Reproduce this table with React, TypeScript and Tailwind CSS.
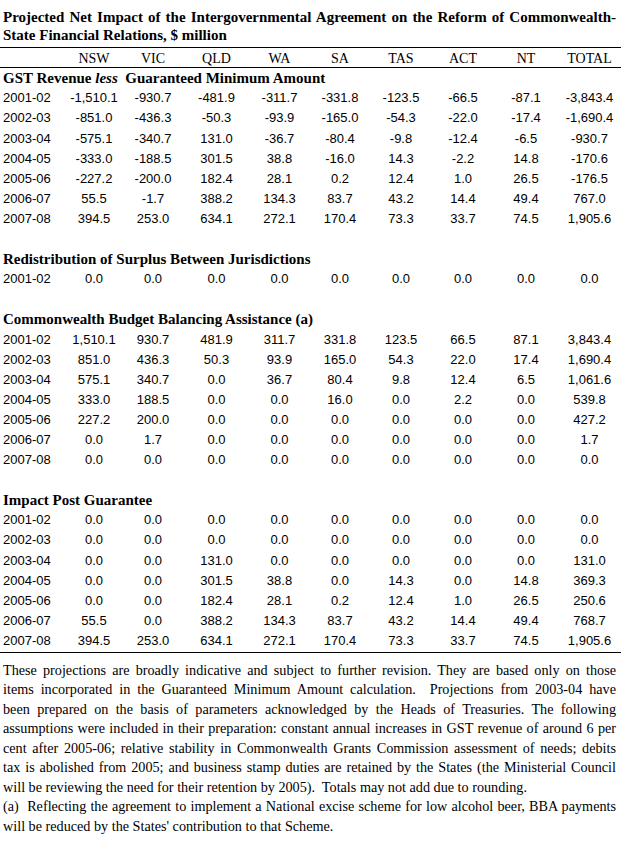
const cols = "grid grid-cols-[66px_56px_62px_65px_61px_60px_62px_62px_64px_63px]"

const heads = ["NSW", "VIC", "QLD", "WA", "SA", "TAS", "ACT", "NT", "TOTAL"]

type Row = [string, ...string[]]

const zeros = (y: string): Row => [y, "0.0", "0.0", "0.0", "0.0", "0.0", "0.0", "0.0", "0.0", "0.0"]

const gst: Row[] = [
  ["2001-02", "-1,510.1", "-930.7", "-481.9", "-311.7", "-331.8", "-123.5", "-66.5", "-87.1", "-3,843.4"],
  ["2002-03", "-851.0", "-436.3", "-50.3", "-93.9", "-165.0", "-54.3", "-22.0", "-17.4", "-1,690.4"],
  ["2003-04", "-575.1", "-340.7", "131.0", "-36.7", "-80.4", "-9.8", "-12.4", "-6.5", "-930.7"],
  ["2004-05", "-333.0", "-188.5", "301.5", "38.8", "-16.0", "14.3", "-2.2", "14.8", "-170.6"],
  ["2005-06", "-227.2", "-200.0", "182.4", "28.1", "0.2", "12.4", "1.0", "26.5", "-176.5"],
  ["2006-07", "55.5", "-1.7", "388.2", "134.3", "83.7", "43.2", "14.4", "49.4", "767.0"],
  ["2007-08", "394.5", "253.0", "634.1", "272.1", "170.4", "73.3", "33.7", "74.5", "1,905.6"],
]

const bba: Row[] = [
  ["2001-02", "1,510.1", "930.7", "481.9", "311.7", "331.8", "123.5", "66.5", "87.1", "3,843.4"],
  ["2002-03", "851.0", "436.3", "50.3", "93.9", "165.0", "54.3", "22.0", "17.4", "1,690.4"],
  ["2003-04", "575.1", "340.7", "0.0", "36.7", "80.4", "9.8", "12.4", "6.5", "1,061.6"],
  ["2004-05", "333.0", "188.5", "0.0", "0.0", "16.0", "0.0", "2.2", "0.0", "539.8"],
  ["2005-06", "227.2", "200.0", "0.0", "0.0", "0.0", "0.0", "0.0", "0.0", "427.2"],
  ["2006-07", "0.0", "1.7", "0.0", "0.0", "0.0", "0.0", "0.0", "0.0", "1.7"],
  zeros("2007-08"),
]

const post: Row[] = [
  zeros("2001-02"),
  zeros("2002-03"),
  ["2003-04", "0.0", "0.0", "131.0", "0.0", "0.0", "0.0", "0.0", "0.0", "131.0"],
  ["2004-05", "0.0", "0.0", "301.5", "38.8", "0.0", "14.3", "0.0", "14.8", "369.3"],
  ["2005-06", "0.0", "0.0", "182.4", "28.1", "0.2", "12.4", "1.0", "26.5", "250.6"],
  ["2006-07", "55.5", "0.0", "388.2", "134.3", "83.7", "43.2", "14.4", "49.4", "768.7"],
  ["2007-08", "394.5", "253.0", "634.1", "272.1", "170.4", "73.3", "33.7", "74.5", "1,905.6"],
]

const serif = "font-['Liberation_Serif','Times_New_Roman',serif]"
const sans = "font-['Liberation_Sans',Arial,sans-serif]"

function DataRow({ row }: { row: Row }) {
  return (
    <div className={`${cols} h-[20.1px] items-center text-[13px] ${sans}`}>
      <div className="pl-[3px]">{row[0]}</div>
      {row.slice(1).map((v, i) => (
        <div key={i} className="text-center">{v}</div>
      ))}
    </div>
  )
}

function Heading({ children }: { children: React.ReactNode }) {
  return (
    <div className={`h-[20.1px] leading-[20.1px] pl-[3px] text-[15px] font-bold ${serif} whitespace-pre`}>
      <span>{children}</span>
    </div>
  )
}

const Blank = () => <div className="h-[20.1px]" />

// one printed line; justified unless it closes a paragraph
function JLine({ children, last }: { children: React.ReactNode; last?: boolean }) {
  return (
    <div className={last ? "text-left" : "text-justify [text-align-last:justify]"}>{children}</div>
  )
}

export default function App() {
  return (
    <div className="w-[621px] bg-white text-black">
      <div className={`pt-[8px] pl-[3px] pr-[5px] text-[15px] leading-[18px] font-bold ${serif}`}>
        <JLine>Projected Net Impact of the Intergovernmental Agreement on the Reform of Commonwealth-</JLine>
        <JLine last>State Financial Relations, $ million</JLine>
      </div>

      <div className="mt-[3px] border-t border-black" />
      <div className={`${cols} h-[19px] items-center text-[14px] ${serif}`}>
        <div />
        {heads.map((h) => (
          <div key={h} className="text-center">{h}</div>
        ))}
      </div>
      <div className="border-t border-black" />

      <Heading>
        GST Revenue <i>less</i>{"  Guaranteed Minimum Amount"}
      </Heading>
      {gst.map((r) => <DataRow key={r[0]} row={r} />)}
      <Blank />

      <Heading>Redistribution of Surplus Between Jurisdictions</Heading>
      <DataRow row={zeros("2001-02")} />
      <Blank />

      <Heading>Commonwealth Budget Balancing Assistance (a)</Heading>
      {bba.map((r) => <DataRow key={r[0]} row={r} />)}
      <Blank />

      <Heading>Impact Post Guarantee</Heading>
      {post.map((r) => <DataRow key={r[0]} row={r} />)}
      <div className="mt-px border-t border-black" />

      <div className={`pt-[8px] pl-[3px] pr-[5px] text-[14.2px] leading-[19.5px] ${serif}`}>
        <JLine>These projections are broadly indicative and subject to further revision. They are based only on those</JLine>
        <JLine>items incorporated in the Guaranteed Minimum Amount calculation.&nbsp; Projections from 2003-04 have</JLine>
        <JLine>been prepared on the basis of parameters acknowledged by the Heads of Treasuries. The following</JLine>
        <JLine>assumptions were included in their preparation: constant annual increases in GST revenue of around 6 per</JLine>
        <JLine>cent after 2005-06; relative stability in Commonwealth Grants Commission assessment of needs; debits</JLine>
        <JLine>tax is abolished from 2005; and business stamp duties are retained by the States (the Ministerial Council</JLine>
        <JLine last>will be reviewing the need for their retention by 2005).&nbsp; Totals may not add due to rounding.</JLine>
        <JLine>(a)&nbsp; Reflecting the agreement to implement a National excise scheme for low alcohol beer, BBA payments</JLine>
        <JLine last>will be reduced by the States' contribution to that Scheme.</JLine>
      </div>
    </div>
  )
}
